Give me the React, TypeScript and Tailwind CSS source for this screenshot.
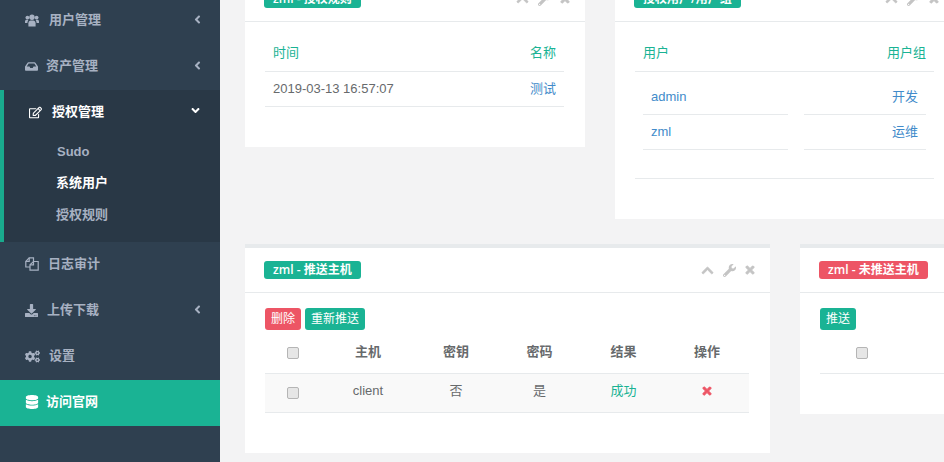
import type { ReactNode } from "react";
import {
  FaAngleDown,
  FaAngleLeft,
  FaChevronUp,
  FaCogs,
  FaDatabase,
  FaDownload,
  FaInbox,
  FaRegEdit,
  FaTimes,
  FaWrench,
} from "react-icons/fa";

function UsersIcon() {
  return (
    <svg viewBox="0 0 14 13" className="h-[13px] w-[14px]" fill="currentColor">
      <circle cx="7" cy="3.2" r="2.7" />
      <circle cx="2.4" cy="3.6" r="1.9" />
      <circle cx="11.6" cy="3.6" r="1.9" />
      <path d="M3.4 12.6V9.2C3.4 7.4 4.6 6.6 5.6 6.6H8.4C9.4 6.6 10.6 7.4 10.6 9.2V12.6Z" />
      <path d="M0 9V7.4C0 6.3.8 5.8 1.5 5.8H3.4C3 6.8 2.5 7.6 2.4 9Z" />
      <path d="M14 9V7.4C14 6.3 13.2 5.8 12.5 5.8H10.6C11 6.8 11.5 7.6 11.6 9Z" />
    </svg>
  );
}

function FilesIcon() {
  return (
    <svg viewBox="0 0 14 14" className="h-[14px] w-[14px]" fill="none" stroke="currentColor" strokeWidth="1.2">
      <path d="M8.5 4.5V.8H4.2L.8 4.4V10H5" />
      <path d="M4.2.8V4.4H.8" />
      <path d="M8.5 4.5H13.2V13.2H5V7.8Z" />
      <path d="M8.5 4.5V7.8H5" />
    </svg>
  );
}

const navTop = [
  { label: "用户管理", icon: <UsersIcon />, box: "w-[24px]", arrow: true },
  { label: "资产管理", icon: <FaInbox />, box: "w-[21px]", arrow: true },
];

const navBottom = [
  { label: "日志审计", icon: <FilesIcon />, box: "w-[23px]", arrow: false },
  { label: "上传下载", icon: <FaDownload />, box: "w-[22px]", arrow: true },
  { label: "设置", icon: <FaCogs className="text-[15px]" />, box: "w-[24px]", arrow: false },
];

function NavItem({ label, icon, box, arrow }: { label: string; icon: ReactNode; box: string; arrow: boolean }) {
  return (
    <div className="flex h-[46px] items-center pb-[2px] pl-[25px] pr-[16px] text-[13px] font-semibold text-[#a7b1c2]">
      <span className={`${box} text-[13px]`}>{icon}</span>
      <span>{label}</span>
      {arrow ? <FaAngleLeft className="mb-[2px] ml-auto text-[13px]" /> : null}
    </div>
  );
}

function Sidebar() {
  return (
    <aside className="h-[462px] w-[220px] shrink-0 overflow-hidden bg-[#2f4050]">
      <div className="-mt-[2px]">
        {navTop.map((item) => (
          <NavItem key={item.label} {...item} />
        ))}
        <div className="h-[152px] border-l-4 border-[#19aa8d] bg-[#293846]">
          <div className="flex h-[46px] items-center pb-[2px] pl-[25px] pr-[18px] text-[13px] font-semibold text-white">
            <span className="w-[23px] text-[13px]">
              <FaRegEdit />
            </span>
            <span>授权管理</span>
            <FaAngleDown className="mb-[3px] ml-auto text-[13px]" />
          </div>
          <div className="-mt-[1px] text-[13px] font-semibold">
            <div className="flex h-[32px] items-center pl-[53px] pt-[2px] text-[#a7b1c2]">Sudo</div>
            <div className="flex h-[32px] items-center pl-[52px] text-white">系统用户</div>
            <div className="flex h-[32px] items-center pl-[52px] text-[#a7b1c2]">授权规则</div>
          </div>
        </div>
        {navBottom.map((item) => (
          <NavItem key={item.label} {...item} />
        ))}
        <div className="flex h-[46px] items-center bg-[#1ab394] pb-[2px] pl-[25px] text-[13px] font-semibold text-white">
          <span className="w-[21px] text-[14px]">
            <FaDatabase />
          </span>
          <span>访问官网</span>
        </div>
      </div>
    </aside>
  );
}

function Card({
  title,
  badge = "bg-[#1ab394]",
  tools = true,
  className,
  children,
}: {
  title: string;
  badge?: string;
  tools?: boolean;
  className: string;
  children: ReactNode;
}) {
  return (
    <section className={`shrink-0 border-t-4 border-[#e7eaec] bg-white ${className}`}>
      <div className="flex h-[45px] items-center justify-between border-b border-[#e7eaec] pl-[19px] pr-[14px]">
        <span
          className={`rounded-[3px] px-[9px] font-['Open_Sans','Noto_Sans_CJK_SC',sans-serif] text-[12px] leading-[18px] font-semibold whitespace-nowrap text-white ${badge}`}
        >
          {title}
        </span>
        {tools ? (
          <div className="flex items-center gap-[8px] text-[13px] text-[#c4c4c4]">
            <FaChevronUp className="mr-[1px]" strokeWidth={30} />
            <FaWrench />
            <FaTimes className="text-[12px]" strokeWidth={40} />
          </div>
        ) : null}
      </div>
      {children}
    </section>
  );
}

function Check({ className = "" }: { className?: string }) {
  return (
    <input
      type="checkbox"
      readOnly
      className={`h-[12px] w-[12px] appearance-none rounded-[2px] border border-[#b5b5b5] bg-[#e6e6e6] ${className}`}
    />
  );
}

function Button({ children, color = "bg-[#1ab394]" }: { children: ReactNode; color?: string }) {
  return (
    <button type="button" className={`h-[22px] rounded-[3px] px-[6px] text-[12px] leading-[22px] text-white ${color}`}>
      {children}
    </button>
  );
}

function HostTable() {
  const cols = "grid grid-cols-[56px_94px_82px_85px_83px_84px] items-center justify-items-center";
  return (
    <div className="w-[484px] text-[13px] text-[#676a6c]">
      <div className={`${cols} h-[44px] border-b border-[#e7eaec] font-bold`}>
        <Check className="mt-[3px]" />
        <span>主机</span>
        <span>密钥</span>
        <span>密码</span>
        <span>结果</span>
        <span>操作</span>
      </div>
      <div className={`${cols} h-[39px] border-b border-[#e7eaec] bg-[#f9f9f9]`}>
        <Check />
        <span className="pb-[4px]">client</span>
        <span className="pb-[4px]">否</span>
        <span className="pb-[4px]">是</span>
        <span className="pb-[4px] text-[#1ab394]">成功</span>
        <FaTimes className="mb-[4px] text-[12px] text-[#ed5565]" strokeWidth={40} />
      </div>
    </div>
  );
}

export default function App() {
  return (
    <div className="flex h-[462px] w-[944px] overflow-hidden bg-[#f3f3f4] font-['Liberation_Sans','Noto_Sans_CJK_SC',sans-serif]">
      <Sidebar />
      <main className="min-w-0 flex-1 pl-[25px]">
        <div className="-mt-[27px] flex items-start gap-[30px]">
          <Card title="zml - 授权规则" className="w-[340px]">
            <div className="h-[125px] pl-[20px] pr-[21px] pt-[14px] text-[13px]">
              <div className="flex h-[36px] items-center justify-between border-b border-[#e7eaec] px-[8px] pb-[2px] text-[#1ab394]">
                <span>时间</span>
                <span>名称</span>
              </div>
              <div className="flex h-[35px] items-center justify-between border-b border-[#e7eaec] px-[8px] text-[#676a6c]">
                <span>2019-03-13 16:57:07</span>
                <span className="text-[#428bca]">测试</span>
              </div>
            </div>
          </Card>
          <Card title="授权用户/用户组" className="w-[339px]">
            <div className="h-[197px] w-[339px] px-[20px] pt-[14px] text-[13px]">
              <div className="flex h-[36px] items-center justify-between border-b border-[#e7eaec] px-[8px] pb-[2px] text-[#1ab394]">
                <span>用户</span>
                <span>用户组</span>
              </div>
              <div className="flex h-[107px] justify-between border-b border-[#e7eaec] px-[8px] text-[#428bca]">
                <div className="w-[145px]">
                  <div className="flex h-[43px] items-end border-b border-[#e7eaec] px-[8px] pb-[8px]">admin</div>
                  <div className="flex h-[35px] items-center border-b border-[#e7eaec] px-[8px]">zml</div>
                </div>
                <div className="w-[122px] text-right">
                  <div className="flex h-[43px] items-end justify-end border-b border-[#e7eaec] px-[8px] pb-[8px]">开发</div>
                  <div className="flex h-[35px] items-center justify-end border-b border-[#e7eaec] px-[8px]">运维</div>
                </div>
              </div>
            </div>
          </Card>
        </div>
        <div className="mt-[25px] flex items-start gap-[30px]">
          <Card title="zml - 推送主机" className="w-[525px]">
            <div className="h-[160px] px-[20px] pt-[15px]">
              <div className="flex gap-[4px]">
                <Button color="bg-[#ed5565]">删除</Button>
                <Button>重新推送</Button>
              </div>
              <HostTable />
            </div>
          </Card>
          <Card title="zml - 未推送主机" badge="bg-[#ed5565]" tools={false} className="w-[525px]">
            <div className="h-[121px] px-[20px] pt-[15px]">
              <div className="flex">
                <Button>推送</Button>
              </div>
              <div className="flex h-[44px] w-[484px] items-center border-b border-[#e7eaec] pl-[36px] text-[13px]">
                <Check className="mt-[3px]" />
              </div>
            </div>
          </Card>
        </div>
      </main>
    </div>
  );
}
